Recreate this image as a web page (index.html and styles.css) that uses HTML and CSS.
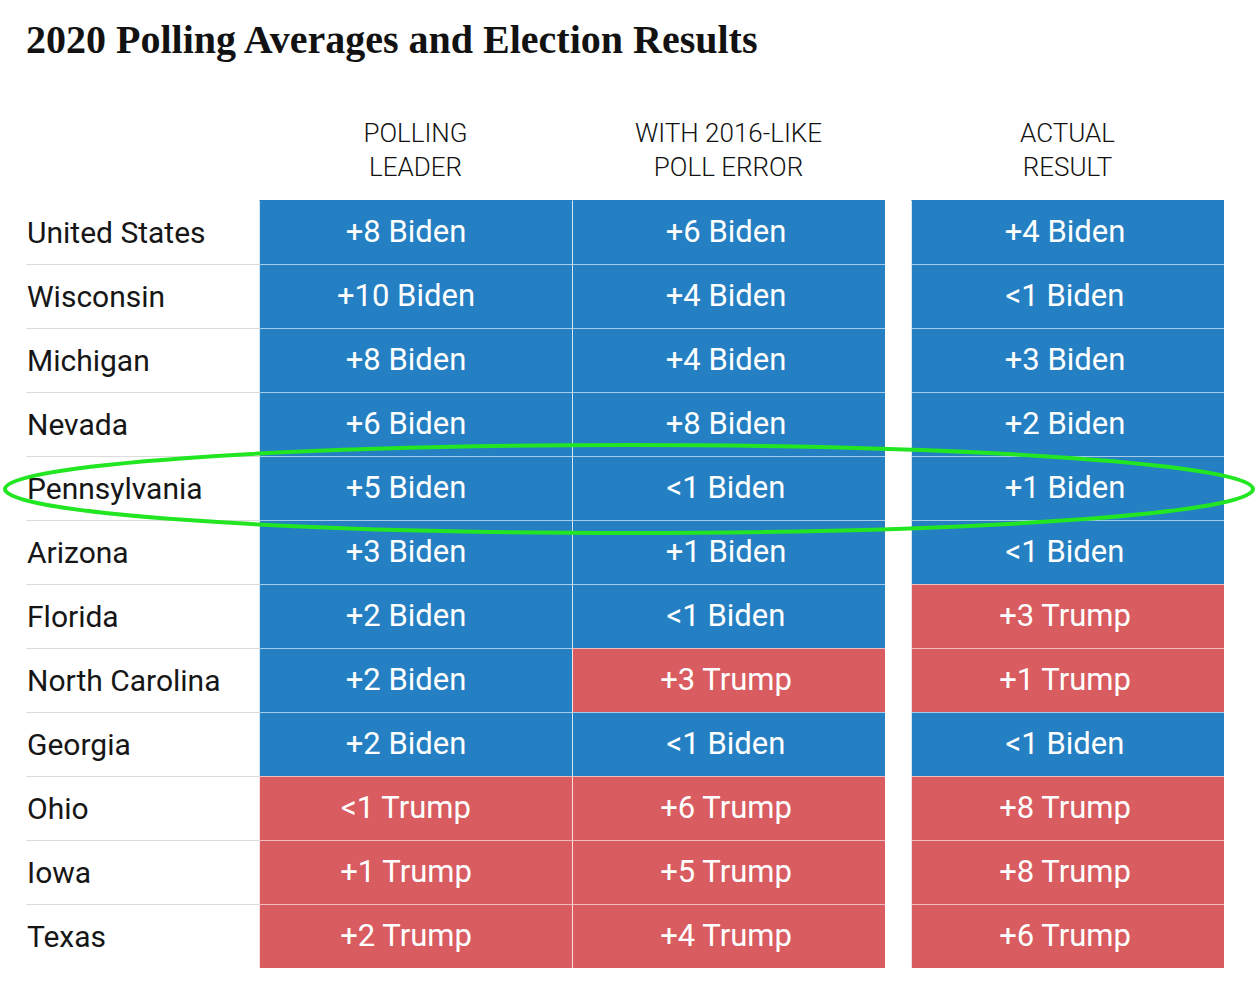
FILE: index.html
```html
<!DOCTYPE html>
<html lang="en">
<head>
<meta charset="utf-8">
<title>2020 Polling Averages and Election Results</title>
<link rel="stylesheet" href="styles.css">
</head>
<body>
<div class="page">
  <h1 class="title">2020 Polling Averages and Election Results</h1>
  <div class="table">
    <div class="head-row">
      <div class="label-head"></div>
      <div class="col-head">POLLING<br>LEADER</div>
      <div class="col-head">WITH 2016-LIKE<br>POLL ERROR</div>
      <div class="spacer"></div>
      <div class="col-head">ACTUAL<br>RESULT</div>
    </div>
    <div class="row"><div class="label">United States</div><div class="cell first b">+8 Biden</div><div class="cell b">+6 Biden</div><div class="spacer"></div><div class="cell b">+4 Biden</div></div>
    <div class="row"><div class="label">Wisconsin</div><div class="cell first b">+10 Biden</div><div class="cell b">+4 Biden</div><div class="spacer"></div><div class="cell b">&lt;1 Biden</div></div>
    <div class="row"><div class="label">Michigan</div><div class="cell first b">+8 Biden</div><div class="cell b">+4 Biden</div><div class="spacer"></div><div class="cell b">+3 Biden</div></div>
    <div class="row"><div class="label">Nevada</div><div class="cell first b">+6 Biden</div><div class="cell b">+8 Biden</div><div class="spacer"></div><div class="cell b">+2 Biden</div></div>
    <div class="row"><div class="label">Pennsylvania</div><div class="cell first b">+5 Biden</div><div class="cell b">&lt;1 Biden</div><div class="spacer"></div><div class="cell b">+1 Biden</div></div>
    <div class="row"><div class="label">Arizona</div><div class="cell first b">+3 Biden</div><div class="cell b">+1 Biden</div><div class="spacer"></div><div class="cell b">&lt;1 Biden</div></div>
    <div class="row"><div class="label">Florida</div><div class="cell first b">+2 Biden</div><div class="cell b">&lt;1 Biden</div><div class="spacer"></div><div class="cell r">+3 Trump</div></div>
    <div class="row"><div class="label">North Carolina</div><div class="cell first b">+2 Biden</div><div class="cell r">+3 Trump</div><div class="spacer"></div><div class="cell r">+1 Trump</div></div>
    <div class="row"><div class="label">Georgia</div><div class="cell first b">+2 Biden</div><div class="cell b">&lt;1 Biden</div><div class="spacer"></div><div class="cell b">&lt;1 Biden</div></div>
    <div class="row"><div class="label">Ohio</div><div class="cell first r">&lt;1 Trump</div><div class="cell r">+6 Trump</div><div class="spacer"></div><div class="cell r">+8 Trump</div></div>
    <div class="row"><div class="label">Iowa</div><div class="cell first r">+1 Trump</div><div class="cell r">+5 Trump</div><div class="spacer"></div><div class="cell r">+8 Trump</div></div>
    <div class="row"><div class="label">Texas</div><div class="cell first r">+2 Trump</div><div class="cell r">+4 Trump</div><div class="spacer"></div><div class="cell r">+6 Trump</div></div>
  </div>
  <svg class="circle" width="1260" height="990" viewBox="0 0 1260 990" aria-hidden="true">
    <ellipse cx="629" cy="489" rx="624" ry="44" fill="none" stroke="#22e622" stroke-width="4"/>
  </svg>
</div>
</body>
</html>
```

FILE: styles.css
```css
html, body {
  margin: 0;
  padding: 0;
  background: #ffffff;
}
.page {
  position: relative;
  width: 1260px;
  height: 990px;
  overflow: hidden;
}
.title {
  margin: 0;
  padding: 18px 0 0 26px;
  font-family: "Liberation Serif", "DejaVu Serif", serif;
  font-weight: 700;
  font-size: 40px;
  line-height: 44px;
  letter-spacing: 0;
  color: #121212;
}
.table {
  margin: 44px 0 0 26px;
  display: flex;
  flex-direction: column;
}
.head-row {
  display: grid;
  grid-template-columns: 233px 313px 313px 26px 313px;
  height: 94px;
}
.col-head {
  text-align: center;
  font-family: Roboto, "Liberation Sans", sans-serif;
  font-weight: 300;
  font-size: 26px;
  line-height: 34px;
  color: #121212;
  padding-top: 10px;
}
.row {
  display: grid;
  grid-template-columns: 233px 313px 313px 26px 313px;
  height: 64px;
}
.label {
  display: flex;
  align-items: center;
  padding-left: 1px;
  font-family: Roboto, "Liberation Sans", sans-serif;
  font-size: 30px;
  color: #161616;
  border-top: 1px solid #dcdcdc;
}
.head-row + .row .label {
  border-top: 1px solid transparent;
}
.cell {
  display: flex;
  align-items: center;
  justify-content: center;
  font-family: Roboto, "Liberation Sans", sans-serif;
  font-size: 31px;
  color: #ffffff;
  border-top: 1px solid rgba(255, 255, 255, 0.6);
  border-left: 1px solid rgba(255, 255, 255, 0.8);
  padding-right: 6px;
  padding-bottom: 3px;
}
.cell.first {
  padding-right: 20px;
}
.head-row + .row .cell {
  border-top-color: transparent;
}
.b { background: #2580c3; }
.r { background: #d85c60; }
.circle {
  position: absolute;
  left: 0;
  top: 0;
  pointer-events: none;
}
```
